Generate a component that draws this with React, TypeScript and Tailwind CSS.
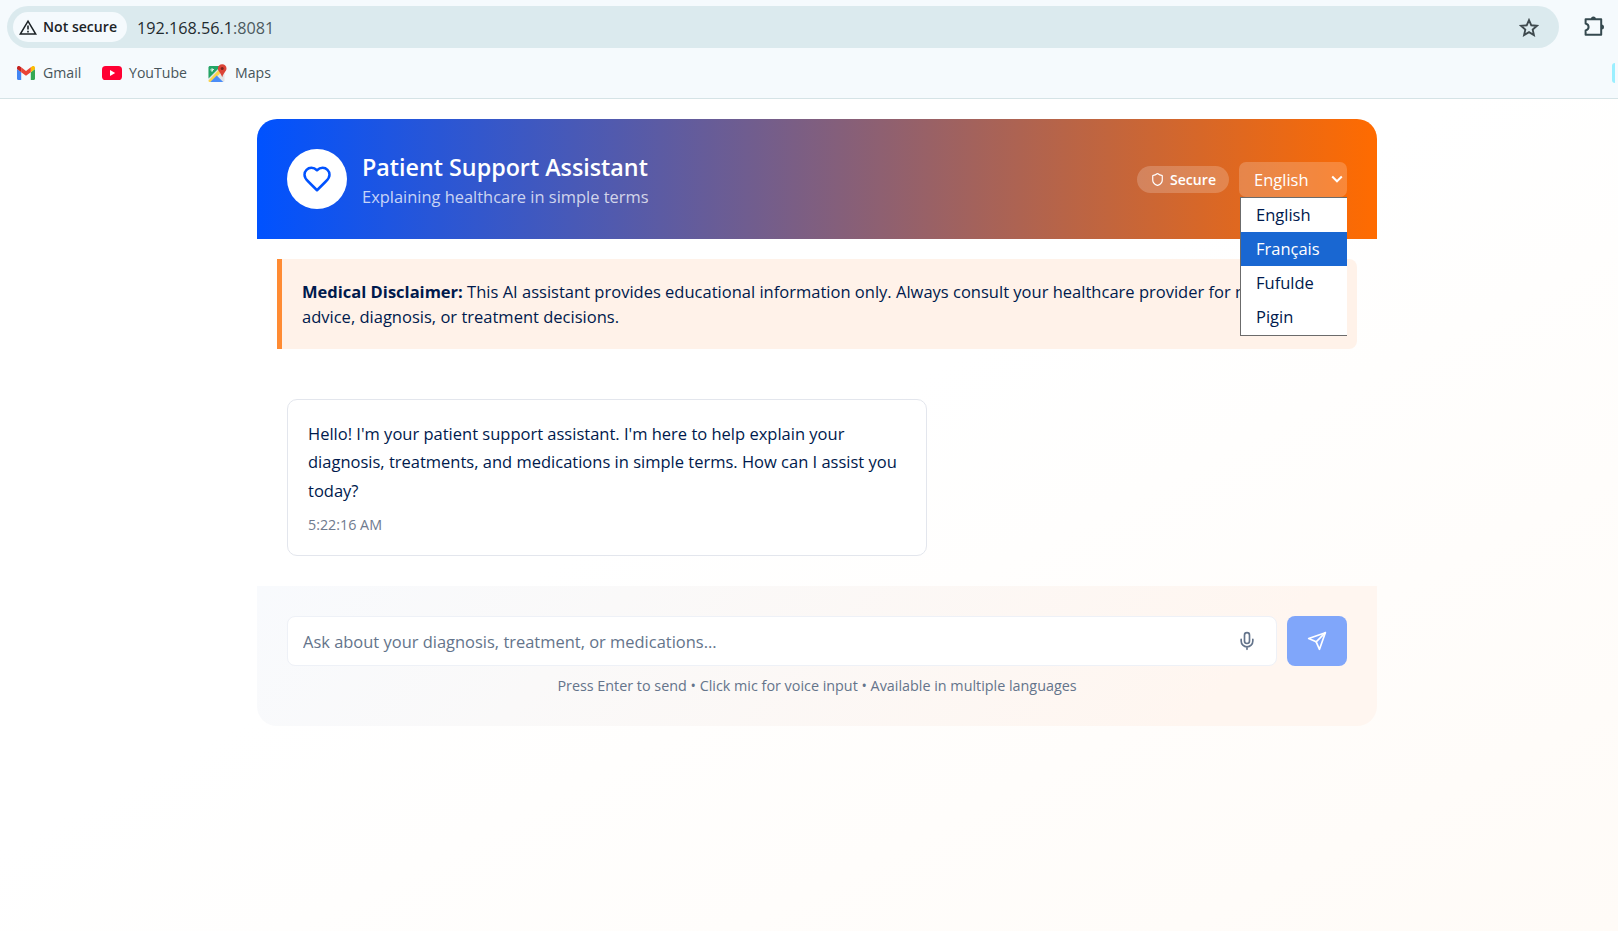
import { useState } from "react";
import { Shield } from "lucide-react";

const languages = ["English", "Français", "Fufulde", "Pigin"];

function WarningIcon() {
  return (
    <svg className="h-[17px] w-[18px] shrink-0" viewBox="0 0 18 17" fill="none">
      <path d="M9 2.2 16.7 15.1H1.3Z" stroke="#1c2326" strokeWidth="1.5" />
      <path d="M9 6.6v4M9 11.8v1.6" stroke="#1c2326" strokeWidth="1.6" />
    </svg>
  );
}

function StarIcon() {
  return (
    <svg className="h-[19px] w-5" viewBox="0 0 20 19" fill="none" stroke="#3f4a4e" strokeWidth="1.9">
      <path d="m10 2.1 2.3 5.2 5.6.5-4.2 3.8 1.2 5.5L10 14.2l-4.9 2.9 1.2-5.5-4.2-3.8 5.6-.5Z" />
    </svg>
  );
}

function ExtensionsIcon() {
  return (
    <svg className="h-[22px] w-[22px]" viewBox="0 0 22 22" fill="none">
      <path
        d="M2.6 4.3h15.6v15.4H2.6v-4.2c1.9-.5 3-1.8 3-3.5s-1.1-3-3-3.5Z"
        stroke="#35494f"
        strokeWidth="2"
        strokeLinejoin="round"
      />
      <path d="M7.9 4a2.5 2.5 0 0 1 5 0ZM18.5 9.5a2.5 2.5 0 0 1 0 5Z" fill="#35494f" />
    </svg>
  );
}

function GmailIcon() {
  return (
    <svg className="h-[14px] w-[18px]" viewBox="0 0 18 14">
      <path d="M0 3v9.8C0 13.5.5 14 1.2 14h3V6.2Z" fill="#4285f4" />
      <path d="M18 3v9.8c0 .7-.5 1.2-1.2 1.2h-3V6.2Z" fill="#34a853" />
      <path d="M13.8 1.3v4.9L18 3V1.8C18 .2 16.2-.5 15 .4Z" fill="#fbbc04" />
      <path d="M4.2 6.2V1.3L9 4.9l4.8-3.6v4.9L9 9.8Z" fill="#ea4335" />
      <path d="M0 1.8V3l4.2 3.2V1.3L3 .4C1.8-.5 0 .2 0 1.8Z" fill="#c5221f" />
    </svg>
  );
}

function YouTubeIcon() {
  return (
    <svg className="h-[14px] w-5" viewBox="0 0 20 14">
      <rect width="20" height="14" rx="3.6" fill="#ff0033" />
      <path d="M8 4v6l5.2-3Z" fill="#fff" />
    </svg>
  );
}

function MapsIcon() {
  return (
    <svg className="h-[19px] w-[19px]" viewBox="0 0 19 19">
      <rect x="0.5" y="2" width="16" height="16" rx="1.6" fill="#e3e5e6" />
      <path d="M2 2h11L.5 14.5V3.5C.5 2.7 1.2 2 2 2Z" fill="#23a566" />
      <path d="M12.2 4.5 14.8 7 3.2 18H2C1.2 18 .5 17.3.5 16.4Z" fill="#fbd44b" />
      <path d="m8.7 11.5 6.5 6.5H2.3Z" fill="#4b8df8" />
      <path d="M5.9 5.5H4.3v.9h.7c-.7 1.3-2.4.6-2-.8.3-.9 1.2-1 1.8-.5" fill="none" stroke="#fff" strokeWidth="0.9" />
      <path d="M14.2.3c2.5 0 4.3 1.9 4.3 4.2 0 2.9-3.1 4.3-4.3 8.7-1.2-4.4-4.3-5.8-4.3-8.7C9.9 2.2 11.7.3 14.2.3Z" fill="#db4437" />
      <circle cx="14.2" cy="4.5" r="1.5" fill="#7b231e" />
    </svg>
  );
}

function HeartIcon() {
  return (
    <svg className="h-[30px] w-[30px]" viewBox="0 0 24 24" fill="none" stroke="#0052ff" strokeWidth="2" strokeLinecap="round" strokeLinejoin="round">
      <path d="M19 14c1.49-1.46 3-3.21 3-5.5A5.5 5.5 0 0 0 16.5 3c-1.76 0-3 .5-4.5 2-1.5-1.5-2.74-2-4.5-2A5.5 5.5 0 0 0 2 8.5c0 2.3 1.5 4.05 3 5.5l7 7Z" />
    </svg>
  );
}

function MicIcon() {
  return (
    <svg className="h-5 w-5" viewBox="0 0 24 24" fill="none" stroke="currentColor" strokeWidth="2" strokeLinecap="round" strokeLinejoin="round">
      <path d="M12 2a3 3 0 0 0-3 3v7a3 3 0 0 0 6 0V5a3 3 0 0 0-3-3Z" />
      <path d="M19 10v2a7 7 0 0 1-14 0v-2M12 19v3" />
    </svg>
  );
}

function SendIcon() {
  return (
    <svg className="h-5 w-5" viewBox="0 0 24 24" fill="none" stroke="currentColor" strokeWidth="2" strokeLinecap="round" strokeLinejoin="round">
      <path d="m22 2-7 20-4-9-9-4Z" />
      <path d="M22 2 11 13" />
    </svg>
  );
}

function BrowserChrome() {
  return (
    <div className="h-[99px] shrink-0 border-b border-[#d5e3e6] bg-[#f5fafd] pt-1.5">
      <div className="flex items-center pl-[7px]">
        <div className="flex h-[42px] w-[1552px] items-center rounded-full bg-[#dbeaee] pr-5 pl-1.5">
          <div className="flex h-[30px] w-[114px] items-center rounded-full bg-[#f5fafd] pl-1.5 text-[14.1px] font-semibold text-[#1c2326]">
            <WarningIcon />
            <span className="ml-1.5 whitespace-nowrap">Not secure</span>
          </div>
          <span className="mt-0.5 ml-2.5 text-[16.2px] text-[#1f2a2e]">
            192.168.56.1<span className="text-[#4c5a5f]">:8081</span>
          </span>
          <span className="ml-auto">
            <StarIcon />
          </span>
        </div>
        <span className="-mt-0.5 ml-6">
          <ExtensionsIcon />
        </span>
      </div>
      <div className="flex h-[50px] items-center pr-[3px] pl-[17px] text-[14.1px] text-[#47555a]">
        <GmailIcon />
        <span className="ml-2 w-[59px]">Gmail</span>
        <YouTubeIcon />
        <span className="ml-[7px] w-[79px]">YouTube</span>
        <MapsIcon />
        <span className="ml-2">Maps</span>
        <span className="ml-auto h-5 w-[3px] rounded-l-sm bg-[#9aefff]" />
      </div>
    </div>
  );
}

function LanguageSelect() {
  const [active, setActive] = useState("Français");
  return (
    <div className="relative h-[35px] w-[108px]">
      <button className="flex h-full w-full items-center justify-between rounded-[7px] bg-white/20 pr-[3px] pl-[15px] text-[16.5px]">
        <span className="mt-[3px]">English</span>
        <svg className="h-3.5 w-3.5" viewBox="0 0 14 14" fill="none" stroke="#fff" strokeWidth="2">
          <path d="m2.2 4.5 4.8 4.8 4.8-4.8" />
        </svg>
      </button>
      <ul className="absolute top-[35px] right-0 z-10 h-[139px] w-[107px] border-y border-l border-[#6b6b6b] bg-white text-[16.5px] text-[#001a4d]">
        {languages.map((name) => (
          <li
            key={name}
            onMouseEnter={() => setActive(name)}
            className={
              name === active
                ? "flex h-[34px] items-center bg-[#1967d2] pt-0.5 pl-[15px] text-white"
                : "flex h-[34px] items-center pt-0.5 pl-[15px]"
            }
          >
            {name}
          </li>
        ))}
      </ul>
    </div>
  );
}

function Header() {
  return (
    <header className="flex h-[120px] items-center rounded-t-[20px] bg-[linear-gradient(90deg,#0052ff,#ff6b00)] px-[30px] text-white">
      <div className="flex h-[60px] w-[60px] items-center justify-center rounded-full bg-white">
        <HeartIcon />
      </div>
      <div className="ml-[15px] pt-0.5">
        <h1 className="text-[23.3px] leading-[33px] font-semibold">Patient Support Assistant</h1>
        <p className="text-[16.43px] leading-[25px] text-white/75">Explaining healthcare in simple terms</p>
      </div>
      <div className="ml-auto flex items-center gap-2.5">
        <div className="flex h-[27px] w-[92px] items-center rounded-full bg-white/20 pl-3.5 text-[14.1px] font-semibold">
          <Shield size={13} strokeWidth={2} className="h-[15px] w-[13px] scale-110" />
          <span className="ml-1.5 pt-px">Secure</span>
        </div>
        <LanguageSelect />
      </div>
    </header>
  );
}

export default function App() {
  const [draft, setDraft] = useState("");
  return (
    <div className="flex h-[931px] w-[1618px] flex-col overflow-hidden bg-white font-['Open_Sans','Noto_Sans',sans-serif]">
      <BrowserChrome />
      <div className="flex-1 bg-[linear-gradient(to_bottom_right,#ffffff_45%,#fffbf7)] pt-5 pl-[257px]">
        <div className="w-[1120px]">
          <Header />
          <div className="mx-5 mt-5 h-[90px] rounded-r-[8px] border-l-[5px] border-[#ff8b33] bg-[#fff2e9] p-5 text-[16.52px] leading-[25px] text-[#001a4d]">
            <strong className="font-bold">Medical Disclaimer:</strong> This AI assistant provides educational
            information only. Always consult your healthcare provider for medical
            <br />
            advice, diagnosis, or treatment decisions.
          </div>
          <main className="px-[30px] pt-[50px] pb-[30px]">
            <div className="h-[157px] w-[640px] rounded-[10px] border border-[#e3e6ed] bg-white p-5">
              <p className="text-[16.5px] leading-[28.4px] text-[#001a4d]">
                Hello! I'm your patient support assistant. I'm here to help explain your diagnosis, treatments,
                and medications in simple terms. How can I assist you today?
              </p>
              <p className="mt-2.5 text-[14.3px] leading-5 text-[#6f7a8e]">5:22:16 AM</p>
            </div>
          </main>
          <footer className="h-[140px] rounded-b-[20px] bg-[linear-gradient(135deg,#f8fafd,#faf9f9_30%,#fff6f0_85%)] p-[30px]">
            <div className="flex gap-2.5">
              <label className="flex h-[50px] flex-1 items-center rounded-[8px] border border-[#eef1f7] bg-white pr-[19px] pl-[15px] text-[#64748b]">
                <input
                  value={draft}
                  onChange={(e) => setDraft(e.target.value)}
                  placeholder="Ask about your diagnosis, treatment, or medications..."
                  className="mt-0.5 flex-1 bg-transparent text-[16.47px] text-[#001a4d] outline-none placeholder:text-[#64748b]"
                />
                <MicIcon />
              </label>
              <button className="flex h-[50px] w-[60px] items-center justify-center rounded-[8px] bg-[#80a6fa] text-white">
                <SendIcon />
              </button>
            </div>
            <p className="mt-2.5 text-center text-[14.35px] leading-5 text-[#64748b]">
              Press Enter to send • Click mic for voice input • Available in multiple languages
            </p>
          </footer>
        </div>
      </div>
    </div>
  );
}
